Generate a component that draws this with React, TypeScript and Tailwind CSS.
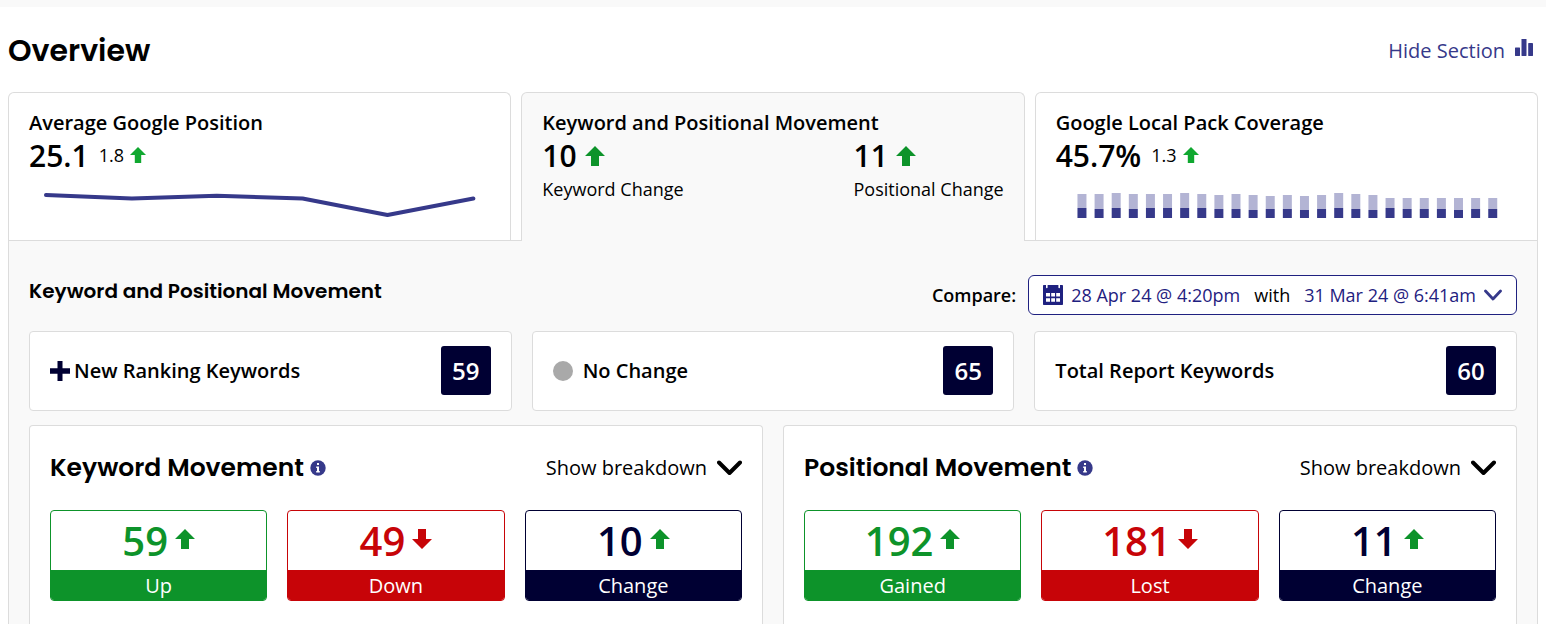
import React from "react";

const HEADING = "font-['Poppins','Inter',sans-serif] font-semibold";

type Tone = "green" | "bright" | "red";

const TONES: Record<Tone, string> = {
  green: "text-[#0d932a]",
  bright: "text-[#10a830]",
  red: "text-[#c70408]",
};

function Arrow({ tone = "green", down = false, small = false }: { tone?: Tone; down?: boolean; small?: boolean }) {
  return (
    <svg
      viewBox="0 0 20 20"
      className={`shrink-0 ${small ? "size-4" : "size-5"} ${TONES[tone]}`}
      fill="currentColor"
      aria-hidden="true"
    >
      {down ? (
        <path d="M10 20 0 10h6V0h8v10h6z" />
      ) : (
        <path d="M10 0 20 10h-6v10H6V10H0z" />
      )}
    </svg>
  );
}

function BarsIcon() {
  return (
    <svg viewBox="0 0 18 17" className="h-[17px] w-[18px]" fill="currentColor" aria-hidden="true">
      <rect x="0" y="8.5" width="5" height="8.5" rx="0.4" />
      <rect x="6.5" y="0" width="5" height="17" rx="0.4" />
      <rect x="13.2" y="4" width="4.8" height="13" rx="0.4" />
    </svg>
  );
}

function CalendarIcon() {
  return (
    <svg viewBox="0 0 20 20" className="size-5 shrink-0" aria-hidden="true">
      <path
        fill="currentColor"
        d="M1 0h2v2.500c0 .5.300.8.8.8s.8-.3.8-.8V0h10.800v2.500c0 .5.300.8.8.8s.8-.3.8-.8V0h2c.6 0 1 .4 1 1v18c0 .6-.4 1-1 1H1c-.6 0-1-.4-1-1V1c0-.6.4-1 1-1z"
      />
      <path
        fill="#fff"
        d="M3 8h4v3.600H3zM8.200 8h3.800v3.600H8.200zM13.200 8H17v3.600h-3.800zM3 13.200h4v3.600H3zM8.200 13.200h3.800v3.600H8.200zM13.200 13.200H17v3.600h-3.800z"
      />
    </svg>
  );
}

function InfoIcon() {
  return (
    <svg viewBox="0 0 16 16" className="size-4" aria-hidden="true">
      <circle cx="8" cy="8" r="7.700" fill="#36398a" />
      <path fill="#fff" d="M7 3h2v2H7zM6.200 6.500H9V11h.8v1.500H6.200V11H7V8h-.8z" />
    </svg>
  );
}

function PositionChart() {
  return (
    <svg viewBox="0 0 462 32" preserveAspectRatio="none" className="mt-3.5 h-8 w-full" role="img" aria-label="Average position trend">
      <polyline
        points="17,6 103,9.500 188,6.700 274,9.500 359,26 445,9.500"
        fill="none"
        stroke="#36398a"
        strokeWidth="4"
        strokeLinecap="round"
        strokeLinejoin="round"
        vectorEffect="non-scaling-stroke"
      />
    </svg>
  );
}

const BARS: [number, number][] = [
  [24, 10], [24, 9], [25, 10], [24, 9], [24, 10], [24, 10], [25, 10], [24, 10], [23, 9],
  [24, 9], [23, 8], [22, 9], [23, 9], [22, 8], [23, 9], [25, 10], [24, 9], [23, 8],
  [20, 10], [20, 9], [20, 9], [20, 9], [20, 8], [20, 9], [20, 9],
];

function CoverageChart() {
  return (
    <svg viewBox="0 0 462 32" preserveAspectRatio="none" className="mt-3.5 h-8 w-full" role="img" aria-label="Local pack coverage by day">
      {BARS.map(([total, dark], i) => (
        <g key={i}>
          <rect x={21.5 + i * 17.14} y={29 - total} width="9" height={total - dark} fill="#b3b4d4" />
          <rect x={21.5 + i * 17.14} y={29 - dark} width="9" height={dark} fill="#36398a" />
        </g>
      ))}
    </svg>
  );
}

function Tab({ title, active = false, children }: { title: string; active?: boolean; children: React.ReactNode }) {
  return (
    <button
      type="button"
      role="tab"
      aria-selected={active}
      className={`flex flex-col items-stretch rounded-t-md border border-[#dcdcdc] border-b-0 px-5 pt-4 text-left ${
        active ? "relative -mb-px bg-[#f9f9f9]" : "bg-white"
      }`}
    >
      <span className="text-xl leading-7 font-semibold">{title}</span>
      {children}
    </button>
  );
}

function Change({ value, label }: { value: number; label: string }) {
  return (
    <span className="flex flex-col">
      <span className="flex items-center gap-2 text-[30px] leading-[38px] font-semibold">
        {value}
        <Arrow />
      </span>
      <span className="text-lg leading-7">{label}</span>
    </span>
  );
}

function Headline({ value, delta }: { value: string; delta: string }) {
  return (
    <span className="flex items-center gap-2.5 text-[30px] leading-[38px] font-semibold">
      {value}
      <span className="flex items-center gap-1.5 pb-0.5 text-lg leading-7 font-normal">
        {delta}
        <Arrow tone="bright" small />
      </span>
    </span>
  );
}

function Summary({ label, value, icon }: { label: string; value: number; icon?: React.ReactNode }) {
  return (
    <div className="flex h-20 items-center justify-between rounded border border-[#dcdcdc] bg-white px-5">
      <div className="flex items-center text-xl font-semibold">
        {icon}
        {label}
      </div>
      <div className="mb-px flex h-[49px] w-[50px] items-center justify-center rounded-[3px] bg-[#000033] text-2xl font-semibold text-white">
        {value}
      </div>
    </div>
  );
}

const BOXES = {
  green: { border: "border-[#0d932a]", fill: "bg-[#0d932a]", text: "text-[#0d932a]" },
  red: { border: "border-[#c70408]", fill: "bg-[#c70408]", text: "text-[#c70408]" },
  navy: { border: "border-[#000033]", fill: "bg-[#000033]", text: "text-[#000033]" },
};

function Stat({ value, label, color }: { value: number; label: string; color: keyof typeof BOXES }) {
  const c = BOXES[color];
  return (
    <div className={`overflow-hidden rounded border ${c.border}`}>
      <div className={`flex h-[59px] items-center justify-center gap-[7px] text-[40px] font-semibold ${c.text}`}>
        <span>{value}</span>
        <span className="pb-[3px]">
          <Arrow tone={color === "red" ? "red" : "green"} down={color === "red"} />
        </span>
      </div>
      <div className={`h-[30px] text-center text-xl leading-8 text-white ${c.fill}`}>{label}</div>
    </div>
  );
}

function Movement({ title, children }: { title: string; children: React.ReactNode }) {
  return (
    <section className="rounded-t border border-b-0 border-[#dcdcdc] bg-white px-5 pt-6 pb-[23px]">
      <div className="flex h-9 items-center justify-between">
        <div className="flex items-center gap-1.5">
          <h3 className={`${HEADING} text-[25px]`}>{title}</h3>
          <button type="button" aria-label={`About ${title}`}>
            <InfoIcon />
          </button>
        </div>
        <button type="button" className="flex items-center gap-2.5 text-xl">
          Show breakdown
          <svg viewBox="0 0 25 16" className="h-4 w-[25px]" fill="none" stroke="#000" strokeWidth="4" strokeLinecap="round" strokeLinejoin="round" aria-hidden="true">
            <path d="M2 2.500 12.500 13 23 2.500" />
          </svg>
        </button>
      </div>
      <div className="mt-6 grid grid-cols-3 gap-5">{children}</div>
    </section>
  );
}

export default function App() {
  return (
    <div className="min-h-screen overflow-hidden border-t-[7px] border-[#f9f9f9] bg-white px-2 font-['Open_Sans','Noto_Sans',sans-serif] text-black">
      <header className="flex h-[85px] items-center justify-between pt-0.5">
        <h1 className={`${HEADING} text-[30px]`}>Overview</h1>
        <button type="button" className="mr-[5px] flex items-center gap-2.5 text-xl text-[#36398a]">
          Hide Section
          <span className="pb-1.5">
            <BarsIcon />
          </span>
        </button>
      </header>

      <div role="tablist" className="grid h-[148px] grid-cols-3 gap-2.5">
        <Tab title="Average Google Position">
          <Headline value="25.1" delta="1.8" />
          <PositionChart />
        </Tab>
        <Tab title="Keyword and Positional Movement" active>
          <span className="flex justify-between">
            <Change value={10} label="Keyword Change" />
            <Change value={11} label="Positional Change" />
          </span>
        </Tab>
        <Tab title="Google Local Pack Coverage">
          <Headline value="45.7%" delta="1.3" />
          <CoverageChart />
        </Tab>
      </div>

      <main role="tabpanel" className="border border-b-0 border-[#dcdcdc] bg-[#f9f9f9] px-5 pt-[34px]">
        <div className="flex justify-between">
          <h2 className={`${HEADING} text-xl leading-8`}>Keyword and Positional Movement</h2>
          <div className="flex items-center gap-3 text-lg">
            <span id="compare-label" className="font-semibold">Compare:</span>
            <button
              type="button"
              aria-labelledby="compare-label compare-dates"
              className="flex h-10 items-center rounded-md border border-[#1f2180] bg-white px-3.5 text-[#1f2180]"
            >
              <CalendarIcon />
              <span id="compare-dates" className="ml-2 flex gap-3.5">
                <span>28 Apr 24 @ 4:20pm</span>
                <span className="text-black">with</span>
                <span>31 Mar 24 @ 6:41am</span>
              </span>
              <svg viewBox="0 0 18 12" className="ml-2 h-3 w-[18px]" fill="none" stroke="#36398a" strokeWidth="2.800" strokeLinecap="round" strokeLinejoin="round" aria-hidden="true">
                <path d="M1.500 2 9 10l7.500-8" />
              </svg>
            </button>
          </div>
        </div>

        <div className="mt-4 grid grid-cols-3 gap-5">
          <Summary
            label="New Ranking Keywords"
            value={59}
            icon={
              <svg viewBox="0 0 20 20" className="mr-1 size-5" fill="#000033" aria-hidden="true">
                <path d="M7.500 0h5v7.200H20v5.600h-7.500V20h-5v-7.200H0V7.200h7.500z" />
              </svg>
            }
          />
          <Summary label="No Change" value={65} icon={<span className="mr-2.5 size-5 rounded-full bg-[#a9a9a9]" />} />
          <Summary label="Total Report Keywords" value={60} />
        </div>

        <div className="mt-3.5 grid grid-cols-2 gap-5">
          <Movement title="Keyword Movement">
            <Stat value={59} label="Up" color="green" />
            <Stat value={49} label="Down" color="red" />
            <Stat value={10} label="Change" color="navy" />
          </Movement>
          <Movement title="Positional Movement">
            <Stat value={192} label="Gained" color="green" />
            <Stat value={181} label="Lost" color="red" />
            <Stat value={11} label="Change" color="navy" />
          </Movement>
        </div>
      </main>
    </div>
  );
}
